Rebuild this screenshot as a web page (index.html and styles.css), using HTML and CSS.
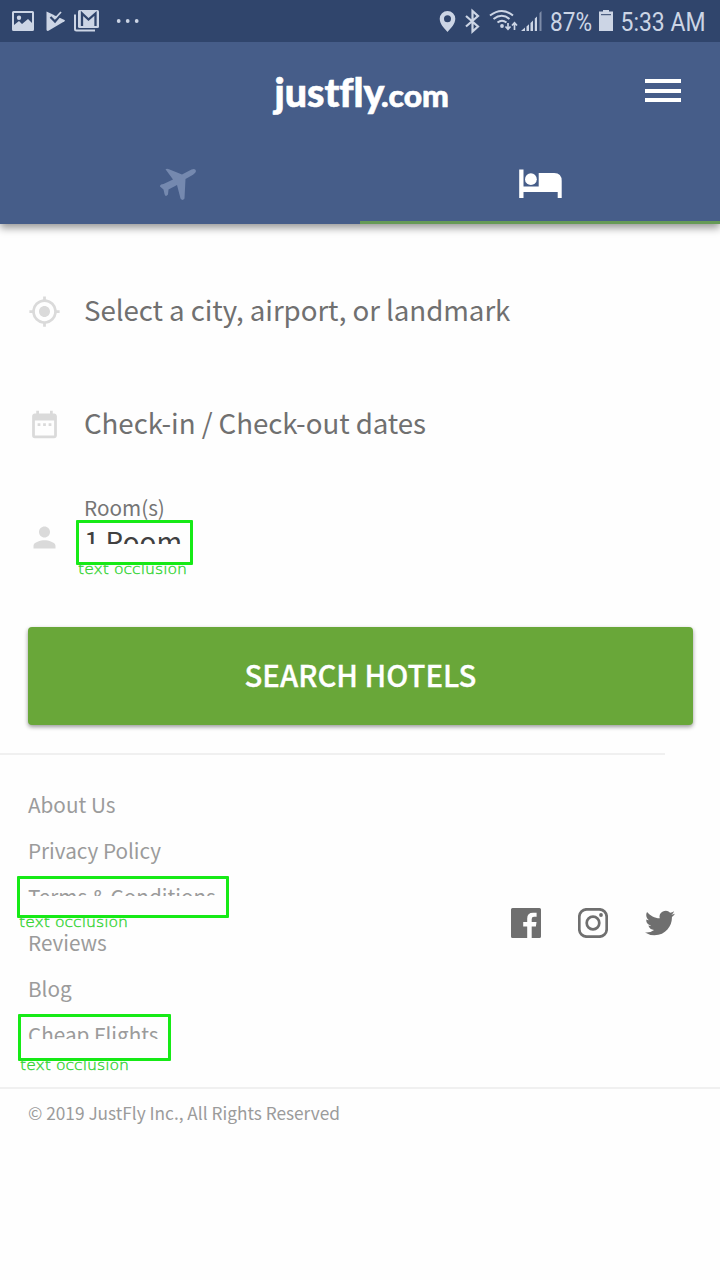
FILE: index.html
```html
<!DOCTYPE html>
<html lang="en">
<head>
<meta charset="utf-8">
<title>JustFly Hotels</title>
<link rel="stylesheet" href="styles.css">
</head>
<body>
<div class="status">
  <svg class="status-left" width="150" height="42" viewBox="0 0 150 42" fill="#ccd5e5">
    <path fill-rule="evenodd" d="M13.500 11h19q1.500 0 1.500 1.500v17q0 1.500-1.500 1.500h-19q-1.500 0-1.500-1.500v-17q0-1.500 1.500-1.500zM14 13v12l5-4 3 3 6-5 4 4V13zM19 15.500a2.200 2.200 0 1 1 0 4.400 2.200 2.200 0 0 1 0-4.400z"/>
    <path d="M46.500 11.500l18 8.500q1 .7 0 1.300l-16 9.500q-2 .6-2-1z"/>
    <path d="M50.500 17l4.500 4.500 8-9.500" fill="none" stroke="#30456c" stroke-width="2.200"/>
    <path d="M54 15.500l9-5v4z" fill="#30456c"/>
    <path d="M55.500 18l5.500-6" fill="none" stroke="#ccd5e5" stroke-width="1.800"/>
    <path d="M75 14.500V29q0 1.500 1.500 1.500H95" fill="none" stroke="#ccd5e5" stroke-width="2"/>
    <rect x="78" y="10" width="21" height="18" rx="1.500"/>
    <path d="M82 26V13.500l6.500 6 7-6V26" fill="none" stroke="#30456c" stroke-width="2.300"/>
    <circle cx="118.700" cy="21" r="1.900"/><circle cx="127.700" cy="21" r="1.900"/><circle cx="136.700" cy="21" r="1.900"/>
  </svg>
  <svg width="290" height="42" viewBox="430 0 290 42" fill="#ccd5e5">
    <path fill-rule="evenodd" d="M447.500 11a7.800 7.800 0 0 1 7.800 7.800c0 5-4.500 9.700-7.800 13.200-3.300-3.500-7.800-8.200-7.800-13.200a7.800 7.800 0 0 1 7.800-7.800zm0 4.300a3.500 3.500 0 1 0 0 7 3.500 3.500 0 0 0 0-7z"/>
    <path d="M466 16l12 10.500-5.500 5V11l5.500 5-12 10.500" fill="none" stroke="#ccd5e5" stroke-width="2.200"/>
    <g fill="none" stroke="#ccd5e5" stroke-width="2">
      <path d="M490 15.500q12-9 23 0M493.500 19q8.500-6.500 16 0M497.500 22.500q4.500-3.500 9 0"/>
      <path stroke-width="1.700" d="M508 23v6M505.500 26.500l2.500 2.800 2.500-2.800M514.500 30v-7M512 25.500l2.500-2.800 2.500 2.800"/>
    </g>
    <circle cx="502" cy="26" r="1.900"/>
    <path d="M521 31l4-3.500V31zM526.500 26.500l2.500-2.300V31h-2.500zM530.500 23l2.500-2.500V31h-2.500zM534.800 18.500l2.200-2V31h-2.200z"/>
    <path opacity=".5" d="M539.500 13l2-2v20h-2z"/>
    <text class="clock" x="550" y="31" textLength="42" lengthAdjust="spacingAndGlyphs">87%</text>
    <path d="M603 10h6v1.500h4V31h-14V11.500h4z"/><path d="M601 14.700h10" stroke="#30456c" stroke-width="1"/>
    <text class="clock" x="620.500" y="31" textLength="85" lengthAdjust="spacingAndGlyphs">5:33 AM</text>
  </svg>
</div>

<header class="header">
  <div class="brand">
    <svg width="180" height="60" viewBox="270 64 180 60" fill="#fff">
      <text class="logo" x="274.500" y="107" textLength="110" lengthAdjust="spacingAndGlyphs">justfly</text>
      <text class="logo logo-small" x="381" y="107" textLength="68" lengthAdjust="spacingAndGlyphs">.com</text>
    </svg>
    <div class="menu"><i></i><i></i><i></i></div>
  </div>
  <nav class="tabs">
    <div class="tab">
      <svg width="40" height="40" viewBox="0 0 40 40" fill="#7589af"><path d="M5.500 4.200Q7 3.200 9 4.200L22 9.500 31.500 4.500Q35.500 3 36 6 36 7.700 33 9.700L25.500 14 24.500 33.500Q22.500 36.300 20.500 33.500L17 20 8.500 24.500 8 29.500Q5.500 32.500 4.500 29L3.500 24.500 0 21.500Q-.5 19.500 3.500 19L13 14.500Z"/></svg>
    </div>
    <div class="tab active">
      <svg width="44" height="32" viewBox="-.7 0 44 32" fill="#fff"><path d="M.5 1.500h4.300v17H20V5h15.500q7.500 0 7.500 8v17h-4v-6H4.800v6H.5z"/><circle cx="12.200" cy="11.200" r="5.900"/></svg>
    </div>
  </nav>
</header>

<main>
  <section class="form">
    <div class="field">
      <svg class="icon" viewBox="0 0 24 24"><path d="M12 8c-2.210 0-4 1.790-4 4s1.790 4 4 4 4-1.790 4-4-1.790-4-4-4zm8.940 3A8.994 8.994 0 0 0 13 3.060V1h-2v2.060A8.994 8.994 0 0 0 3.060 11H1v2h2.060A8.994 8.994 0 0 0 11 20.940V23h2v-2.060A8.994 8.994 0 0 0 20.940 13H23v-2h-2.060zM12 19c-3.870 0-7-3.130-7-7s3.130-7 7-7 7 3.130 7 7-3.130 7-7 7z"/></svg>
      <span class="placeholder">Select a city, airport, or landmark</span>
    </div>
    <div class="field">
      <svg class="icon" viewBox="0 0 24 24"><path d="M9 11H7v2h2v-2zm4 0h-2v2h2v-2zm4 0h-2v2h2v-2zm2-7h-1V2h-2v2H8V2H6v2H5c-1.110 0-1.990.9-1.990 2L3 20a2 2 0 0 0 2 2h14c1.100 0 2-.9 2-2V6c0-1.100-.9-2-2-2zm0 16H5V9h14v11z"/></svg>
      <span class="placeholder">Check-in / Check-out dates</span>
    </div>
    <div class="field rooms">
      <svg class="icon" viewBox="0 0 24 24"><path d="M12 12c2.210 0 4-1.790 4-4s-1.790-4-4-4-4 1.790-4 4 1.790 4 4 4zm0 2c-2.670 0-8 1.340-8 4v2h16v-2c0-2.660-5.330-4-8-4z"/></svg>
      <div class="room-text">
        <div class="label">Room(s)</div>
        <div class="value">1 Room</div>
        <div class="mark mark-room"><svg class="tag" width="112" height="14"><text x="0" y="11" textLength="109" lengthAdjust="spacingAndGlyphs">text occlusion</text></svg></div>
      </div>
    </div>
    <button class="search">SEARCH HOTELS</button>
  </section>

  <footer>
    <div class="footer-main">
      <ul class="links">
        <li>About Us</li>
        <li>Privacy Policy</li>
        <li><div class="cut cut-terms">Terms &amp; Conditions</div>
          <div class="mark mark-terms"><svg class="tag" width="112" height="14"><text x="0" y="11" textLength="109" lengthAdjust="spacingAndGlyphs">text occlusion</text></svg></div></li>
        <li>Reviews</li>
        <li>Blog</li>
        <li><div class="cut cut-cheap">Cheap Flights</div>
          <div class="mark mark-cheap"><svg class="tag" width="112" height="14"><text x="0" y="11" textLength="109" lengthAdjust="spacingAndGlyphs">text occlusion</text></svg></div></li>
      </ul>
      <div class="social">
        <svg width="30" height="30" viewBox="0 0 30 30" fill="#6f6f6f"><path d="M1.500 0h27Q30 0 30 1.500v27q0 1.500-1.500 1.500H20.700V18.500h4.200l.6-4.600h-4.800V11q0-2.200 2.300-2.200h2.600V4.700h-3.600q-5.800 0-5.800 5.700v3.500h-4v4.600h4V30H1.500Q0 30 0 28.500v-27Q0 0 1.500 0z"/></svg>
        <svg width="30" height="30" viewBox="0 0 30 30" fill="none" stroke="#6f6f6f"><rect x="1.300" y="1.300" width="27.400" height="27.400" rx="7.500" stroke-width="2.700"/><circle cx="15" cy="15" r="6.300" stroke-width="2.700"/><circle cx="23" cy="7" r="1.900" fill="#6f6f6f" stroke="none"/></svg>
        <svg width="30" height="30" viewBox="0 0 24 24" fill="#6f6f6f"><path d="M23.953 4.570a10 10 0 0 1-2.825.775 4.958 4.958 0 0 0 2.163-2.723c-.951.555-2.005.959-3.127 1.184a4.920 4.920 0 0 0-8.384 4.482C7.690 8.095 4.067 6.130 1.640 3.162a4.822 4.822 0 0 0-.666 2.475c0 1.710.87 3.213 2.188 4.096a4.904 4.904 0 0 1-2.228-.616v.060a4.923 4.923 0 0 0 3.946 4.827 4.996 4.996 0 0 1-2.212.085 4.936 4.936 0 0 0 4.604 3.417 9.867 9.867 0 0 1-6.102 2.105c-.39 0-.779-.023-1.170-.067a13.995 13.995 0 0 0 7.557 2.209c9.053 0 13.998-7.496 13.998-13.985 0-.210 0-.420-.015-.630A9.935 9.935 0 0 0 24 4.590z"/></svg>
      </div>
    </div>
    <div class="copyright">© 2019 JustFly Inc., All Rights Reserved</div>
  </footer>
</main>
</body>
</html>
```
FILE: styles.css
```css
* { box-sizing: border-box; }
body {
  margin: 0;
  width: 720px;
  height: 1280px;
  overflow: hidden;
  background: #fefefe;
  font-family: "Noto Sans CJK SC", "Noto Sans", sans-serif;
}
svg { display: block; flex: none; }

.status {
  position: relative;
  z-index: 1;
  display: flex;
  justify-content: space-between;
  height: 42px;
  background: #30456c;
}
.clock { font: 26px Roboto, sans-serif; }

.header {
  height: 182px;
  background: #465d89;
  box-shadow: 0 4px 8px rgba(0, 0, 0, .4);
}
.brand {
  display: flex;
  justify-content: space-between;
  height: 101px;
  padding: 22px 39px 0 270px;
}
.logo {
  font: 900 39px Lato, sans-serif;
  font-variant-ligatures: none;
  stroke: #fff;
  stroke-width: .6px;
}
.logo-small { font-size: 30px; stroke-width: .6px; }
.menu {
  display: flex;
  flex-direction: column;
  gap: 5.500px;
  width: 36px;
  padding-top: 15px;
}
.menu i { height: 4px; background: #fff; }
.tabs { display: flex; height: 81px; }
.tab {
  flex: 1;
  display: flex;
  justify-content: center;
  padding-top: 22px;
  border-bottom: 3px solid transparent;
}
.tab.active { padding-top: 25px; border-color: #669a57; }

.form { height: 529px; padding: 31px 27px 0 28px; }
.field {
  display: flex;
  align-items: center;
  height: 113px;
}
.icon { width: 33px; height: 33px; fill: #dadada; }
.placeholder {
  margin-left: 23px;
  padding-bottom: 6px;
  font-size: 27.700px;
  letter-spacing: -.06px;
  line-height: 40px;
  color: #707070;
  white-space: nowrap;
}
.rooms { height: 146px; align-items: flex-start; }
.rooms .icon { margin-top: 40px; }
.room-text { position: relative; margin-left: 22px; padding-top: 11px; }
.label { margin-left: 1px; font-size: 20.700px; line-height: 30px; color: #757575; }
.value {
  height: 22px;
  margin-left: 1px;
  overflow: hidden;
  font-size: 27.700px;
  line-height: 36px;
  color: #404040;
}
.search {
  display: block;
  width: 665px;
  height: 98px;
  padding: 0 0 4px;
  border: 0;
  border-radius: 4px;
  background: #69a739;
  box-shadow: 0 2px 4px rgba(0, 0, 0, .4);
  color: #fff;
  font: 500 29.300px "Noto Sans CJK SC", sans-serif;
  -webkit-text-stroke: .3px #fff;
}

.mark { position: absolute; border: 3px solid #16ea16; border-radius: 1px; }
.mark-room { left: -7px; top: 39px; width: 117px; height: 45px; }
.mark-terms { left: -11px; top: 3px; width: 212px; height: 42px; }
.mark-cheap { left: -10px; top: 3px; width: 153px; height: 47px; }
.tag {
  position: absolute;
  left: -1px;
  top: calc(100% + 1px);
  fill: #35d435;
  stroke: #35d435;
  stroke-width: .35px;
  font: 200 14px "DejaVu Sans", sans-serif;
}

footer::before {
  content: "";
  display: block;
  width: 665px;
  height: 2px;
  background: #f0f0f0;
}
.footer-main {
  display: flex;
  justify-content: space-between;
  height: 332px;
  padding: 26px 45px 0 28px;
}
.links { margin: 0; padding: 0; list-style: none; }
.links li {
  position: relative;
  height: 46px;
  font-size: 20.700px;
  line-height: 46px;
  color: #9b9b9b;
  white-space: nowrap;
}
.cut { overflow: hidden; }
.cut-terms { height: 23px; }
.cut-cheap { height: 28px; }
.social { display: flex; gap: 37px; padding-top: 127px; }
.copyright {
  padding: 9px 28px;
  border-top: 2px solid #f0f0f0;
  font-size: 17.250px;
  line-height: 30px;
  color: #9b9b9b;
}
```
